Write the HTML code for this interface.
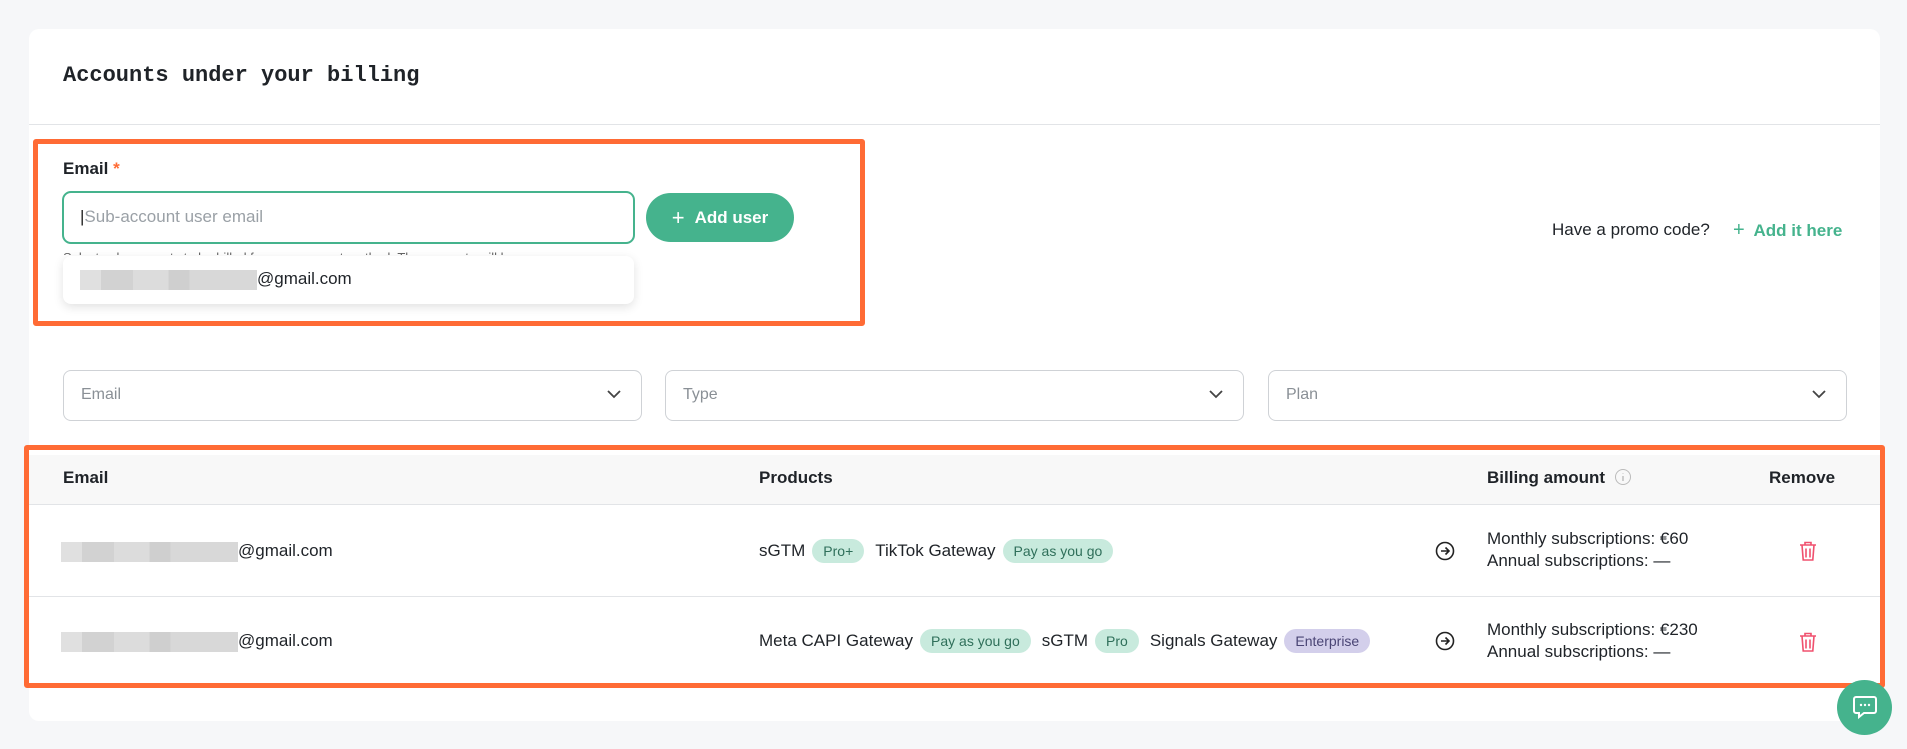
<!DOCTYPE html>
<html><head><meta charset="utf-8"><style>
*{box-sizing:border-box;margin:0;padding:0}
body{width:1907px;height:749px;background:#f6f7f9;font-family:"Liberation Sans",sans-serif;color:#1f2328;position:relative;overflow:hidden;font-size:17px}
.a{position:absolute}
.card{left:29px;top:29px;width:1851px;height:692px;background:#fff;border-radius:10px}
.title{left:63px;top:63px;font-family:"Liberation Mono",monospace;font-weight:bold;font-size:22px}
.div{left:29px;top:124px;width:1851px;height:1px;background:#e2e4e7}
.ob{border:5px solid #ff6b35;border-radius:3px}
.input{left:62px;top:191px;width:573px;height:53px;border:2px solid #45b38d;border-radius:9px;color:#9aa0a6;padding:14px 16px;font-size:17px}
.btn{left:646px;top:193px;width:148px;height:49px;border-radius:25px;background:#45b38d;color:#fff;font-weight:bold;font-size:17px;display:flex;align-items:center;justify-content:center;gap:10px}
.dd{left:63px;top:256px;width:571px;height:48px;background:#fff;border-radius:8px;box-shadow:0 3px 10px rgba(0,0,0,.12);padding:13px 17px}
.blur{display:inline-block;width:177px;height:20px;vertical-align:middle;background:linear-gradient(90deg,#e0e0e0 0 12%,#d2d2d2 12% 30%,#dcdcdc 30% 50%,#cfcfcf 50% 62%,#d8d8d8 62% 100%)}
.sel{top:370px;height:51px;width:579px;border:1px solid #cfd2d6;border-radius:8px;color:#8a9096;padding:15px 17px;font-size:16px}
.sel svg{position:absolute;right:20px;top:19px}
.th{left:29px;top:455px;width:1851px;height:50px;background:#f8f8f8;border-bottom:1px solid #e2e4e7}
.hd{top:468px;font-weight:bold;font-size:17px}
.row{left:29px;width:1851px;height:1px;background:#e2e4e7}
.bd{display:inline-block;padding:4px 11px;border-radius:14px;font-size:14px;margin:0 11px 0 7px;background:#c8eadd;color:#2f6f5a}
.en{background:#d3cfeb;color:#4a4575}
.prod{left:759px;white-space:nowrap}
</style></head><body>
<div class="a card"></div>
<div class="a title">Accounts under your billing</div>
<div class="a div"></div>

<div class="a" style="left:63px;top:159px;font-weight:bold">Email <span style="color:#ff6b35">*</span></div>
<div class="a input"><span style="color:#222">|</span>Sub-account user email</div>
<div class="a" style="left:63px;top:250px;font-size:13px;color:#666;height:5px;overflow:hidden;width:560px">Select sub-accounts to be billed for your account method. The accounts will be</div>
<div class="a btn"><span style="font-size:22px;font-weight:normal">+</span>Add user</div>
<div class="a dd"><span class="blur"></span>@gmail.com</div>
<div class="a ob" style="left:33px;top:139px;width:832px;height:187px"></div>

<div class="a" style="left:1552px;top:220px;font-size:17px">Have a promo code?</div>
<div class="a" style="left:1733px;top:219px;color:#45b38d;font-weight:bold;font-size:17px"><span style="font-weight:normal;font-size:20px">+</span>&nbsp; Add it here</div>

<div class="a sel" style="left:63px">Email<svg width="14" height="9"><path d="M1 1l6 6 6-6" stroke="#444" stroke-width="1.8" fill="none"/></svg></div>
<div class="a sel" style="left:665px">Type<svg width="14" height="9"><path d="M1 1l6 6 6-6" stroke="#444" stroke-width="1.8" fill="none"/></svg></div>
<div class="a sel" style="left:1268px">Plan<svg width="14" height="9"><path d="M1 1l6 6 6-6" stroke="#444" stroke-width="1.8" fill="none"/></svg></div>

<div class="a th"></div>
<div class="a hd" style="left:63px">Email</div>
<div class="a hd" style="left:759px">Products</div>
<div class="a hd" style="left:1487px">Billing amount <svg width="18" height="18" style="vertical-align:-3px;margin-left:4px"><circle cx="9" cy="9" r="7.5" stroke="#bbb" fill="none"/><path d="M9 8v5M9 5.5v.5" stroke="#bbb" stroke-width="1.4"/></svg></div>
<div class="a hd" style="left:1769px">Remove</div>

<div class="a" style="left:61px;top:541px"><span class="blur" style="width:177px"></span>@gmail.com</div>
<div class="a prod" style="top:539px">sGTM<span class="bd">Pro+</span>TikTok Gateway<span class="bd">Pay as you go</span></div>
<div class="a row" style="top:596px"></div>
<div class="a" style="left:61px;top:631px"><span class="blur" style="width:177px"></span>@gmail.com</div>
<div class="a prod" style="top:629px">Meta CAPI Gateway<span class="bd">Pay as you go</span>sGTM<span class="bd">Pro</span>Signals Gateway<span class="bd en">Enterprise</span></div>

<svg class="a" style="left:1435px;top:541px" width="20" height="20"><circle cx="10" cy="10" r="8.5" stroke="#222" stroke-width="1.6" fill="none"/><path d="M6 10h8M10.5 6.5l3.5 3.5-3.5 3.5" stroke="#222" stroke-width="1.6" fill="none"/></svg>
<svg class="a" style="left:1435px;top:631px" width="20" height="20"><circle cx="10" cy="10" r="8.5" stroke="#222" stroke-width="1.6" fill="none"/><path d="M6 10h8M10.5 6.5l3.5 3.5-3.5 3.5" stroke="#222" stroke-width="1.6" fill="none"/></svg>

<div class="a" style="left:1487px;top:528px;line-height:22px">Monthly subscriptions: €60<br>Annual subscriptions: —</div>
<div class="a" style="left:1487px;top:619px;line-height:22px">Monthly subscriptions: €230<br>Annual subscriptions: —</div>

<svg class="a" style="left:1798px;top:540px" width="20" height="22"><path d="M2 5h16M7 5V2.5h6V5M4 5l1.2 15h9.6L16 5M8 8.5v9M12 8.5v9" stroke="#f0506e" stroke-width="1.6" fill="none"/></svg>
<svg class="a" style="left:1798px;top:631px" width="20" height="22"><path d="M2 5h16M7 5V2.5h6V5M4 5l1.2 15h9.6L16 5M8 8.5v9M12 8.5v9" stroke="#f0506e" stroke-width="1.6" fill="none"/></svg>

<div class="a ob" style="left:24px;top:445px;width:1861px;height:243px"></div>

<div class="a" style="left:1837px;top:680px;width:55px;height:55px;border-radius:50%;background:#45b38d"></div>
<svg class="a" style="left:1851px;top:693px" width="28" height="28"><path d="M5 4h18a2 2 0 0 1 2 2v12a2 2 0 0 1-2 2H13l-5 4v-4H5a2 2 0 0 1-2-2V6a2 2 0 0 1 2-2z" stroke="#fff" stroke-width="2" fill="none"/><circle cx="10" cy="12" r="1.2" fill="#fff"/><circle cx="14" cy="12" r="1.2" fill="#fff"/><circle cx="18" cy="12" r="1.2" fill="#fff"/></svg>
</body></html>
